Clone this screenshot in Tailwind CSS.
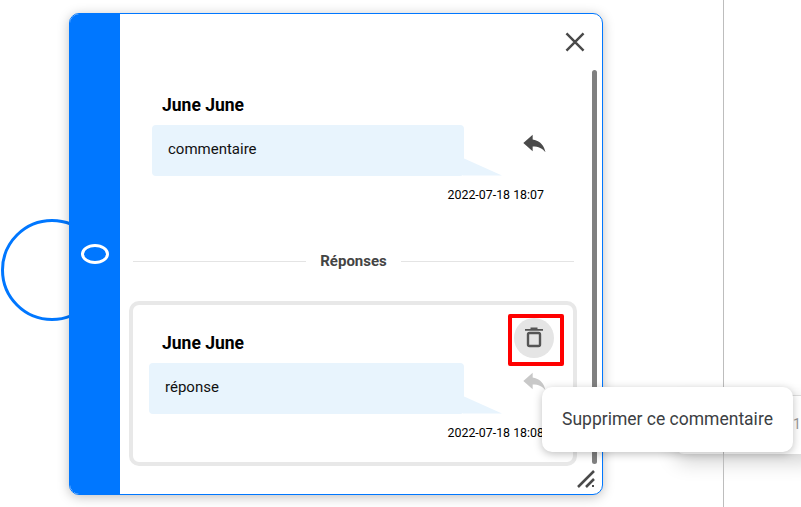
<!DOCTYPE html>
<html lang="fr">
<head>
  <meta charset="UTF-8" />
  <title>Commentaires</title>
  <script src="https://cdn.jsdelivr.net/npm/@tailwindcss/browser@4"></script>
</head>
<body class="bg-white font-['Roboto',sans-serif] w-[801px] h-[507px] overflow-hidden relative">

  <!-- page behind the window -->
  <div class="absolute left-[676px] top-[395px] w-[140px] h-[59px] bg-white border-t border-[#dcdcdc] rounded-lg shadow-[0_8px_20px_rgba(0,0,0,0.18)]"></div>
  <div class="absolute left-[723px] top-0 w-px h-full bg-[#bdbdbd]"></div>
  <div class="absolute left-[1px] top-[219px] w-[102px] h-[102px] rounded-full border-[3px] border-[#0077ff]"></div>
  <div class="absolute left-[793px] top-[414px] text-[14px] text-[#999]">1</div>

  <!-- comment window -->
  <div class="absolute left-[69px] top-[13px] w-[534px] h-[482px] flex bg-white border border-[#0077ff] rounded-[10px] overflow-hidden shadow-[0_2px_12px_rgba(0,0,0,0.25)]">
    <div class="w-[50px] shrink-0 bg-[#0077ff] flex items-center justify-center">
      <div class="w-[28px] h-[20px] rounded-[50%] border-[3px] border-white"></div>
    </div>

    <div class="relative flex-1 min-w-0">
      <button class="absolute left-[444px] top-[17px] w-[22px] h-[22px]">
        <svg viewBox="0 0 18 18" class="w-[22px] h-[22px]" fill="none" stroke="#4a4a4a" stroke-width="2"><path d="M2 2L16 16M16 2L2 16"/></svg>
      </button>
      <div class="absolute left-[472px] top-[56px] w-[5px] h-[394px] rounded-full bg-[#808080]"></div>

      <!-- comment -->
      <div class="pt-[81px] pl-[32px] h-[237px]">
        <div class="ml-[10px] text-[17.5px] leading-[20px] font-bold text-black">June June</div>
        <div class="flex mt-[10px]">
          <div class="w-[312px] h-[51px] bg-[#e8f4fd] rounded-[4px] px-[16px] py-[14px] text-[15px] leading-[20px] text-[#111]">commentaire</div>
          <svg class="-ml-px" width="39" height="51" viewBox="0 0 39 51"><path d="M0 33L39 50.5H0Z" fill="#e8f4fd"/></svg>
          <svg class="ml-[19px] mt-[4px]" width="28" height="28" viewBox="0 0 24 24"><path fill="#4a4a4a" d="M10 9V5l-8 7 8 7v-4.100c5 0 8.500 1.600 11 5.100-1-5-4-10-11-11z"/></svg>
        </div>
        <div class="w-[392px] mt-[11px] text-right text-[12.4px] leading-[16px] text-black">2022-07-18 18:07</div>
      </div>

      <!-- separator -->
      <div class="flex items-center gap-[14px] pl-[13px] w-[454px] h-[20px]">
        <div class="flex-1 h-px bg-[#e4e4e4]"></div>
        <div class="text-[15px] font-bold text-[#444]">Réponses</div>
        <div class="flex-1 h-px bg-[#e4e4e4]"></div>
      </div>

      <!-- reply -->
      <div class="relative ml-[9px] mt-[30px] w-[448px] h-[165px] border-[4px] border-[#e8e8e8] rounded-[10px] pt-[28px] pl-[16px]">
        <div class="ml-[13px] text-[17.5px] leading-[20px] font-bold text-black">June June</div>
        <div class="flex mt-[10px]">
          <div class="w-[315px] h-[51px] bg-[#e8f4fd] rounded-[4px] px-[16px] py-[14px] text-[15px] leading-[20px] text-[#111]">réponse</div>
          <svg class="-ml-px" width="39" height="51" viewBox="0 0 39 51"><path d="M0 33L39 50.5H0Z" fill="#e8f4fd"/></svg>
          <svg class="ml-[19px] mt-[4px]" width="28" height="28" viewBox="0 0 24 24"><path fill="#c8c8c8" d="M10 9V5l-8 7 8 7v-4.100c5 0 8.500 1.600 11 5.100-1-5-4-10-11-11z"/></svg>
        </div>
        <div class="w-[395px] mt-[11px] text-right text-[12.4px] leading-[16px] text-black">2022-07-18 18:08</div>
        <div class="absolute left-[375px] top-[9px] w-[56px] h-[52px] border-[4px] border-[#ff0000] rounded-[2px] pl-[2px]">
          <div class="w-[40px] h-[40px] rounded-full bg-[#e5e5e5] flex items-center justify-center">
            <svg width="24" height="24" viewBox="0 0 24 24" fill="#555"><path d="M8.500 1.500h7v1.500h-7zM3 3h18v1.800H3z"/><rect x="6" y="7" width="12" height="13" rx="1.500" fill="none" stroke="#555" stroke-width="2.400"/></svg>
          </div>
        </div>
      </div>

      <svg class="absolute left-[457px] top-[456px]" width="20" height="20" viewBox="0 0 20 20" stroke="#4a4a4a" stroke-width="2.500" fill="none"><path d="M1 17L17 1M9 17L17 9"/><path d="M15 16h2" stroke-width="2"/></svg>
    </div>
  </div>

  <!-- tooltip -->
  <div class="absolute left-[542px] top-[387px] w-[251px] h-[65px] bg-white rounded-[10px] shadow-[0_2px_8px_rgba(0,0,0,0.25)] flex items-center justify-center text-[17.500px] text-[#3c4043]">Supprimer ce commentaire</div>
</body>
</html>
